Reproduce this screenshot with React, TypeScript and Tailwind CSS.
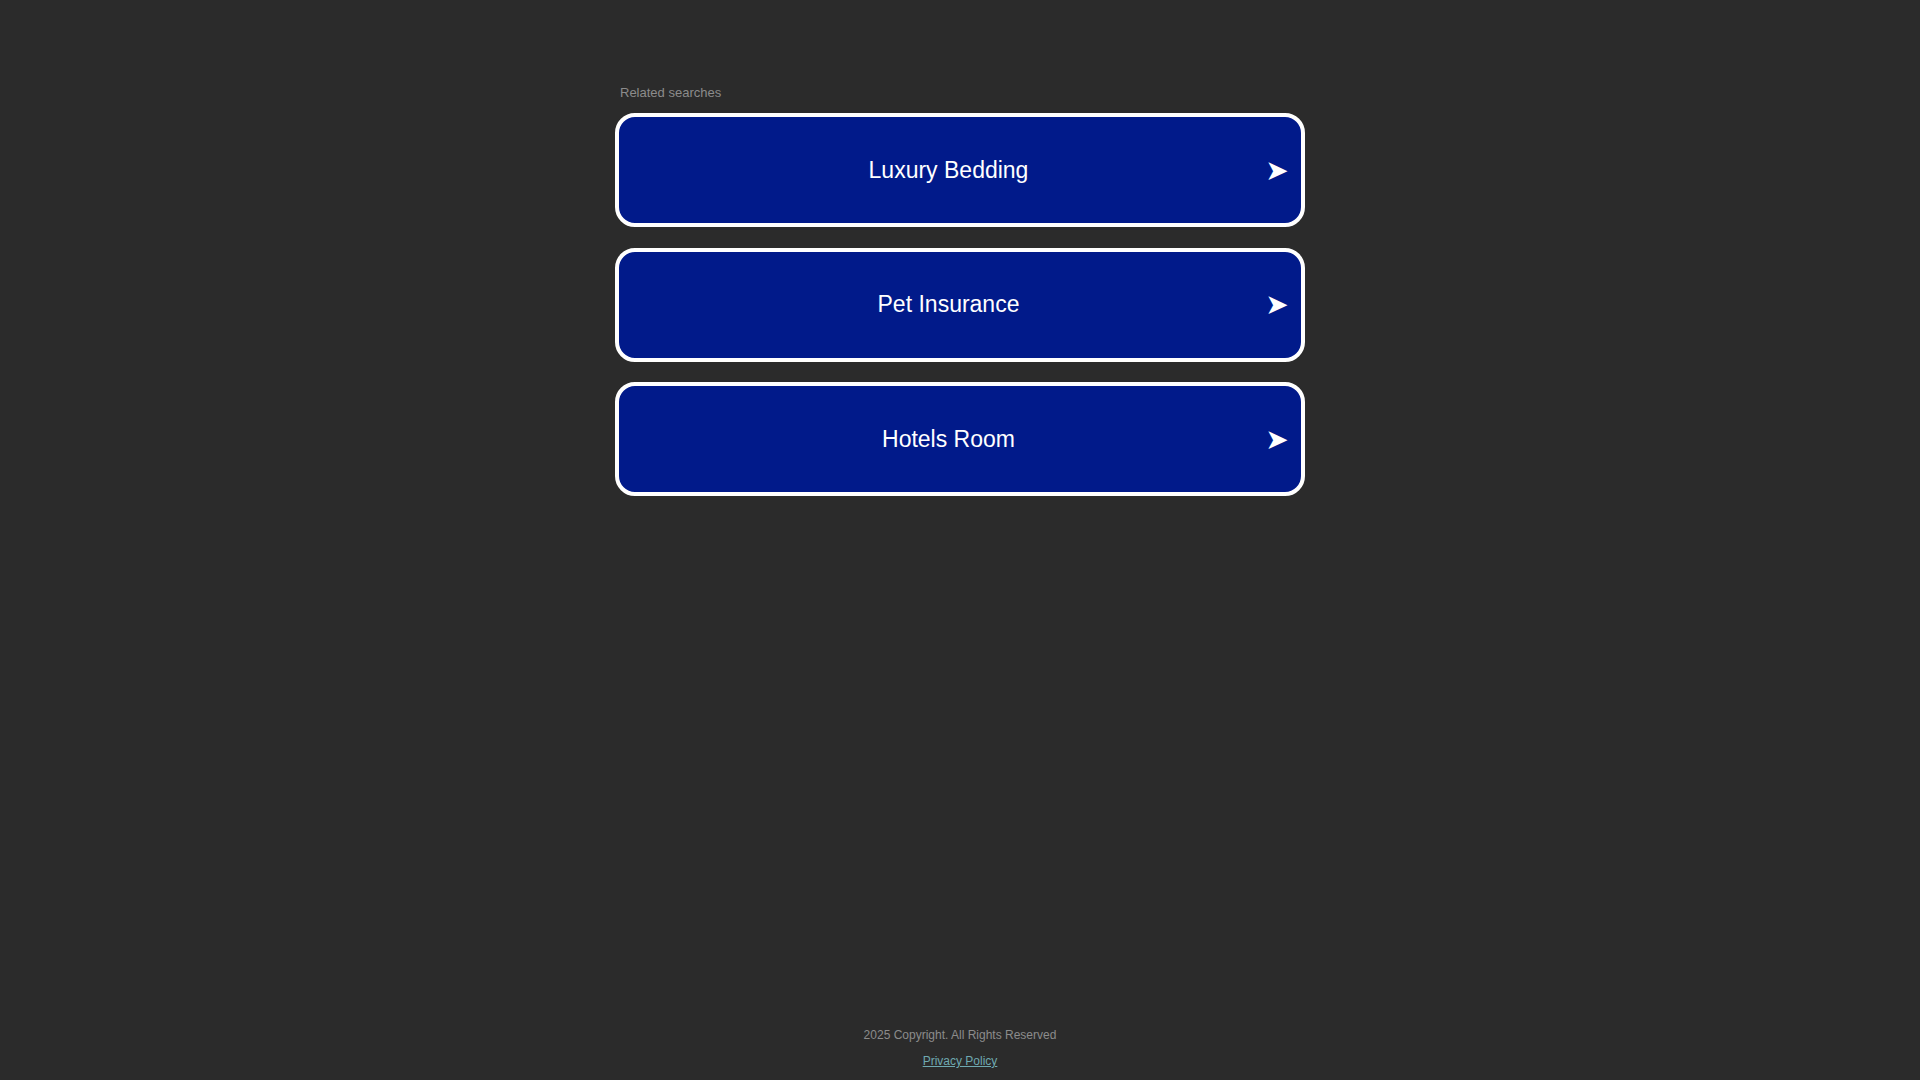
import React from "react";

const items = ["Luxury Bedding", "Pet Insurance", "Hotels Room"];

export default function App() {
  return (
    <div
      className="min-h-screen bg-[#2b2b2b] flex flex-col"
      style={{ fontFamily: '"Liberation Sans", Arial, sans-serif' }}
    >
      <main className="w-[690px] mx-auto pt-[85px]">
        <div className="pl-[5px] text-[13px] leading-[15px] text-[#8c8c8c]">Related searches</div>
        <div className="mt-[13.3px] flex flex-col gap-[20.5px]">
          {items.map((t) => (
            <a
              key={t}
              href="#"
              className="h-[114px] flex items-center border-4 border-white rounded-[20px] bg-[#011a8a] text-white pl-[14px] pr-[11px]"
            >
              <span className="flex-1 text-center text-[23px] leading-[27px]">{t}</span>
              <span
                className="w-[26px] text-[28px] leading-[27px] text-center"
                style={{ fontFamily: '"DejaVu Sans", sans-serif' }}
              >
                ➤
              </span>
            </a>
          ))}
        </div>
      </main>
      <footer className="mt-auto pb-[12px] flex flex-col items-center text-[12px] leading-[14px]">
        <div className="text-[#8c8c8c]">2025 Copyright. All Rights Reserved</div>
        <a href="#" className="mt-[12px] text-[#6fa9b1] underline">
          Privacy Policy
        </a>
      </footer>
    </div>
  );
}
